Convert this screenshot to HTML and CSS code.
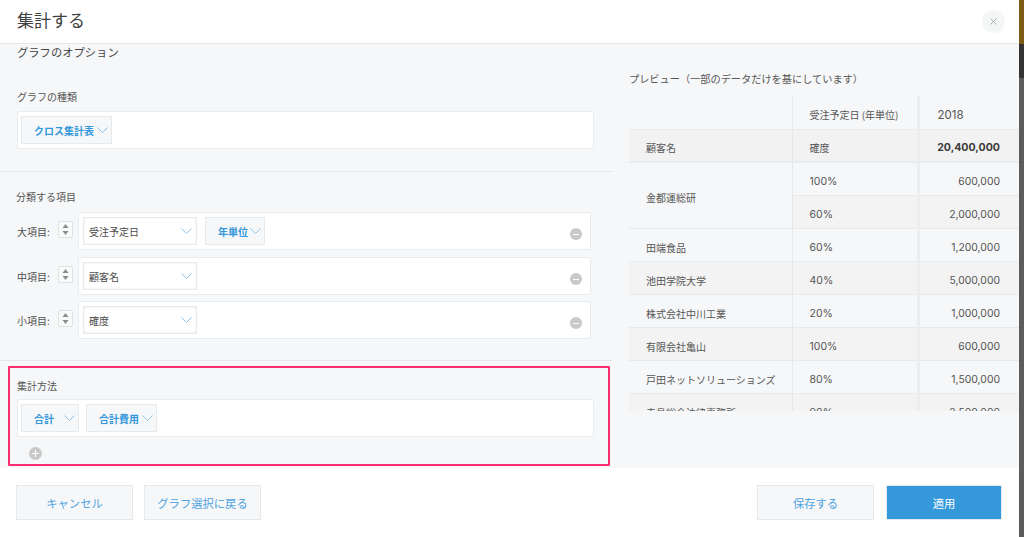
FILE: index.html
```html
<!DOCTYPE html>
<html lang="ja">
<head>
<meta charset="utf-8">
<title>集計する</title>
<link rel="stylesheet" href="styles.css">
</head>
<body>
<div class="screen">
  <div class="dialog">
    <header class="head">
      <h1 class="title">集計する</h1>
      <button class="close"><svg width="9" height="9" viewBox="0 0 9 9"><path d="M1.5 1.5l6 6M7.5 1.5l-6 6" stroke="#a9adb0" stroke-width="1" fill="none"/></svg></button>
    </header>
    <main class="body">
      <div class="left">
        <section class="sec sec-type">
          <div class="opt-title">グラフのオプション</div>
          <div class="label label-type">グラフの種類</div>
          <div class="box">
            <div class="sel sel-flat sel-w91"><span>クロス集計表</span><svg class="chev" width="11" height="6" viewBox="0 0 11 6"><path d="M.5.5l5 5 5-5" /></svg></div>
          </div>
        </section>
        <section class="sec sec-group">
          <div class="label label-group">分類する項目</div>
          <div class="row">
            <span class="row-name">大項目:</span>
            <span class="spin"><svg width="7" height="11" viewBox="0 0 7 11"><path d="M3.5 0l3 4h-6zM3.5 11l3-4h-6z" fill="#8a8d90"/></svg></span>
            <div class="box box-row">
              <div class="sel sel-white"><span>受注予定日</span><svg class="chev" width="11" height="6" viewBox="0 0 11 6"><path d="M.5.5l5 5 5-5" /></svg></div>
              <div class="sel sel-flat sel-w60"><span>年単位</span><svg class="chev" width="11" height="6" viewBox="0 0 11 6"><path d="M.5.5l5 5 5-5" /></svg></div>
              <span class="minus"></span>
            </div>
          </div>
          <div class="row">
            <span class="row-name">中項目:</span>
            <span class="spin"><svg width="7" height="11" viewBox="0 0 7 11"><path d="M3.5 0l3 4h-6zM3.5 11l3-4h-6z" fill="#8a8d90"/></svg></span>
            <div class="box box-row">
              <div class="sel sel-white"><span>顧客名</span><svg class="chev" width="11" height="6" viewBox="0 0 11 6"><path d="M.5.5l5 5 5-5" /></svg></div>
              <span class="minus"></span>
            </div>
          </div>
          <div class="row">
            <span class="row-name">小項目:</span>
            <span class="spin"><svg width="7" height="11" viewBox="0 0 7 11"><path d="M3.5 0l3 4h-6zM3.5 11l3-4h-6z" fill="#8a8d90"/></svg></span>
            <div class="box box-row">
              <div class="sel sel-white"><span>確度</span><svg class="chev" width="11" height="6" viewBox="0 0 11 6"><path d="M.5.5l5 5 5-5" /></svg></div>
              <span class="minus"></span>
            </div>
          </div>
        </section>
        <section class="frame">
          <div class="label label-agg">集計方法</div>
          <div class="box box-agg">
            <div class="sel sel-flat sel-w58"><span>合計</span><svg class="chev" width="11" height="6" viewBox="0 0 11 6"><path d="M.5.5l5 5 5-5" /></svg></div>
            <div class="sel sel-flat sel-w71"><span>合計費用</span><svg class="chev" width="11" height="6" viewBox="0 0 11 6"><path d="M.5.5l5 5 5-5" /></svg></div>
          </div>
          <span class="plus"></span>
        </section>
      </div>
      <div class="right">
        <div class="preview-title">プレビュー（一部のデータだけを基にしています）</div>
        <div class="clip">
          <table class="tbl">
            <colgroup><col class="c1"><col class="c2"><col class="c3"></colgroup>
            <tr class="r-top"><td class="blank"></td><td>受注予定日 (年単位)</td><td class="year">2018</td></tr>
            <tr class="r-head"><td>顧客名</td><td>確度</td><td class="num total">20,400,000</td></tr>
            <tr><td rowspan="2" class="merged">金都運総研</td><td class="pct">100%</td><td class="num">600,000</td></tr>
            <tr class="g2"><td class="pct">60%</td><td class="num">2,000,000</td></tr>
            <tr><td>田端食品</td><td class="pct">60%</td><td class="num">1,200,000</td></tr>
            <tr class="g"><td>池田学院大学</td><td class="pct">40%</td><td class="num">5,000,000</td></tr>
            <tr><td>株式会社中川工業</td><td class="pct">20%</td><td class="num">1,000,000</td></tr>
            <tr class="g"><td>有限会社亀山</td><td class="pct">100%</td><td class="num">600,000</td></tr>
            <tr><td>戸田ネットソリューションズ</td><td class="pct">80%</td><td class="num">1,500,000</td></tr>
            <tr class="g"><td>寺島総合法律事務所</td><td class="pct">90%</td><td class="num">2,500,000</td></tr>
          </table>
        </div>
      </div>
    </main>
    <footer class="foot">
      <button class="btn btn-cancel">キャンセル</button>
      <button class="btn btn-back">グラフ選択に戻る</button>
      <span class="grow"></span>
      <button class="btn btn-save">保存する</button>
      <button class="btn btn-apply">適用</button>
    </footer>
  </div>
  <div class="backdrop">
    <div class="bd-a"></div>
    <div class="bd-b"></div>
    <div class="bd-c"></div>
  </div>
</div>
</body>
</html>
```
FILE: styles.css
```css
* { box-sizing: border-box; }
html, body { margin: 0; padding: 0; height: 100%; overflow: hidden; }
body {
  font-family: "Noto Sans CJK JP", "Noto Sans", sans-serif;
  color: #4a4a4a;
  font-size: 10px;
  background: #4a4a4a;
}
.screen { display: flex; width: 1024px; height: 537px; }
.dialog { width: 1019px; height: 537px; background: #fff; display: flex; flex-direction: column; }
.backdrop { flex: 1; display: flex; flex-direction: column; }
.bd-a { height: 44px; background: #7a5c14; }
.bd-b { height: 34px; background: #333; }
.bd-c { flex: 1; background: #5c5c5c; }

.head { height: 44px; border-bottom: 1px solid #e3e7e8; display: flex; align-items: center; justify-content: space-between; padding: 0 14px 3px 17px; flex: none; }
.title { margin: 0; font-size: 17px; font-weight: 400; color: #3f3f3f; line-height: 24px; }
.close { width: 23px; height: 23px; border-radius: 50%; border: 0; background: #f5f7f7; padding: 0; display: flex; align-items: center; justify-content: center; margin-top: 3px; }

.body { height: 424px; background: #f6f7f8; display: flex; flex: none; }
.left { width: 612px; flex: none; }
.right { flex: 1; padding: 28px 0 0 10px; min-width: 0; }

.sec { border-bottom: 1px solid #e3e7e8; }
.sec-type { height: 128px; }
.sec-group { height: 189px; }
.opt-title { font-size: 11.3px; line-height: 16px; padding: 0 0 0 17px; color: #444; }
.label { font-size: 10px; line-height: 14px; color: #555; padding-left: 17px; }
.label-type { margin-top: 30px; margin-bottom: 7px; }
.label-group { margin-top: 0; padding-top: 18px; padding-left: 16px; height: 40px; }
.label-agg { padding-left: 7px; padding-top: 11px; height: 31px; }

.box { background: #fff; border: 1px solid #e9ecee; border-radius: 2px; margin-left: 17px; width: 577px; height: 38px; display: flex; align-items: center; gap: 7px; padding-left: 3px; }
.box-row { margin-left: 0; width: 513px; gap: 8px; position: relative; padding-left: 4px; }
.box-agg { margin-left: 7px; }

.sel { height: 28px; display: flex; align-items: center; justify-content: space-between; border: 1px solid #e6eaec; flex: none; }
.sel-flat { background: #f6f7f8; font-weight: 700; color: #3498db; padding: 0 1px 0 12px; font-size: 10px; }
.sel-white { background: #fff; width: 114px; padding: 0 2px 0 5px; color: #4a4a4a; font-size: 10px; box-shadow: inset 0 0 3px #eceff1; }
.sel-w91 { width: 91px; }
.sel-w60 { width: 60px; }
.sel-w58 { width: 58px; }
.sel-w71 { width: 71px; }
.chev { margin-right: 2px; flex: none; }
.chev path { fill: none; stroke: #8fc3ea; stroke-width: 1; }

.row { display: flex; align-items: center; height: 38px; margin-bottom: 7px; }
.row + .row + .row { margin-top: -1px; }
.row:last-child { margin-bottom: 0; }
.row-name { width: 58px; padding-left: 17px; font-size: 10px; white-space: nowrap; flex: none; color: #4f4f4f; }
.spin { width: 15px; height: 17px; margin-right: 5px; margin-top: -3px; border: 1px solid #dfe2e4; border-radius: 2px; background: #fafbfb; display: flex; align-items: center; justify-content: center; flex: none; }
.minus { position: absolute; right: 8px; top: 15px; width: 12px; height: 12px; border-radius: 50%; background: #c9c9c9; }
.minus::after { content: ""; position: absolute; left: 3px; right: 3px; top: 5.5px; height: 1px; background: #fff; }

.frame { margin: 5px 0 0 8px; width: 602px; height: 100px; border: 2px solid #ff2d70; border-radius: 1px; }
.plus { display: block; width: 13px; height: 13px; border-radius: 50%; background: #c9c9c9; margin: 10px 0 0 19px; position: relative; }
.plus::before { content: ""; position: absolute; left: 3px; right: 3px; top: 6px; height: 1px; background: #fff; }
.plus::after { content: ""; position: absolute; top: 3px; bottom: 3px; left: 6px; width: 1px; background: #fff; }

.preview-title { font-size: 10.2px; line-height: 14px; height: 24px; color: #555; white-space: nowrap; margin-left: 7px; }
.clip { height: 315px; overflow: hidden; margin-left: 7px; }
.tbl { width: 390px; border-collapse: collapse; table-layout: fixed; font-size: 10px; color: #555; }
.c1 { width: 163px; }
.c2 { width: 126px; }
.c3 { width: 101px; }
.tbl tr { height: 33px; }
.tbl td { padding: 5px 0 0 17px; border-top: 1px solid #e8ebed; border-right: 1px solid #e6e9eb; white-space: nowrap; }
.tbl td:nth-last-child(2) { border-right: 3px solid #ebedee; }
.tbl td:last-child { border-right: 0; }
.tbl .merged { border-right: 1px solid #e6e9eb; }
.r-top td { border-top: 0; }
.tbl td.pct { font-family: "Inter", "Noto Sans", sans-serif; font-size: 10.5px; }
.r-top .year { font-size: 11.5px; padding-left: 18px; }
.r-head td { background: #f2f2f3; border-bottom: 2px solid #e8ebed; }
.g td, .g2 td { background: #f3f3f4; }
.num { text-align: right; padding: 5px 19px 0 0 !important; font-size: 10.4px; font-family: "Inter", "Noto Sans", sans-serif; }
.tbl td.total { font-size: 10.6px; font-weight: 700; color: #3b3b3b; }
.tbl td.year { font-family: "Inter", "Noto Sans", sans-serif; }

.foot { flex: 1; display: flex; align-items: flex-start; padding: 17px 17px 0 16px; }
.btn { height: 35px; border: 1px solid #e6e9eb; background: #f6f7f8; color: #4ea3e0; font-family: inherit; font-size: 11.3px; padding: 0; }
.btn-cancel { width: 117px; }
.btn-back { width: 117px; margin-left: 11px; }
.btn-save { width: 117px; font-size: 11.3px; }
.btn-apply { width: 116px; margin-left: 12px; background: #3498db; border: 1px solid #e6e9eb; color: #fff; }
.grow { flex: 1; }
```
